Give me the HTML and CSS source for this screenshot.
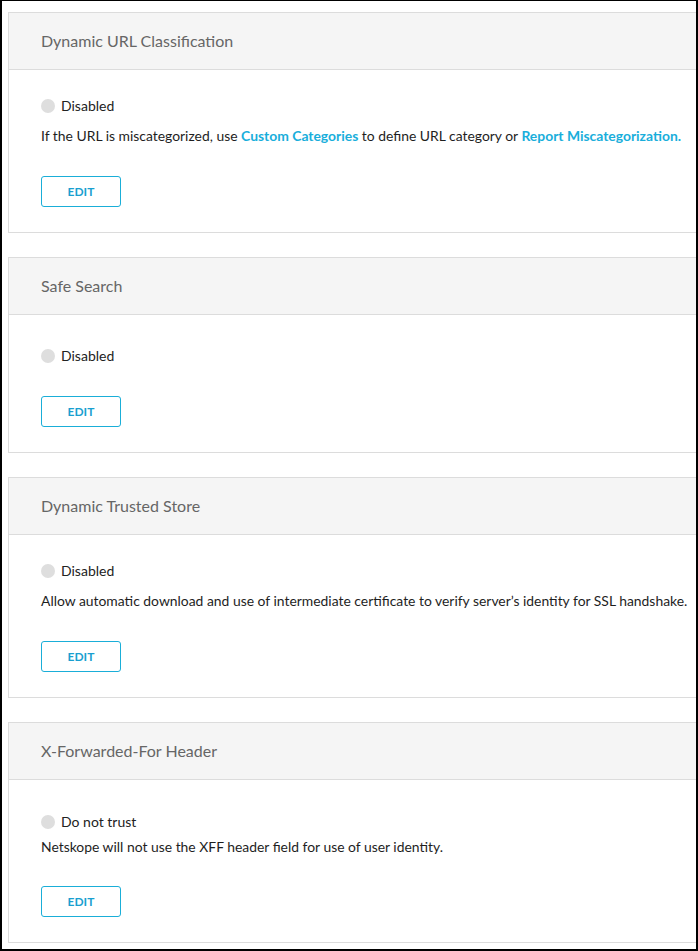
FILE: index.html
```html
<!DOCTYPE html>
<html>
<head>
<meta charset="utf-8">
<link rel="stylesheet" href="styles.css">
</head>
<body>
<div class="frame">
  <div class="stack">
    <section class="card">
      <header class="card-head">Dynamic URL Classification</header>
      <div class="card-body">
        <div class="status"><span class="dot"></span>Disabled</div>
        <p class="desc">If the URL is miscategorized, use <a class="link">Custom Categories</a> to define URL category or <a class="link">Report Miscategorization.</a></p>
        <button class="btn">EDIT</button>
      </div>
    </section>
    <section class="card">
      <header class="card-head">Safe Search</header>
      <div class="card-body card-body--short">
        <div class="status"><span class="dot"></span>Disabled</div>
        <button class="btn">EDIT</button>
      </div>
    </section>
    <section class="card">
      <header class="card-head">Dynamic Trusted Store</header>
      <div class="card-body">
        <div class="status"><span class="dot"></span>Disabled</div>
        <p class="desc">Allow automatic download and use of intermediate certificate to verify server’s identity for SSL handshake.</p>
        <button class="btn">EDIT</button>
      </div>
    </section>
    <section class="card">
      <header class="card-head">X-Forwarded-For Header</header>
      <div class="card-body card-body--tight">
        <div class="status"><span class="dot"></span>Do not trust</div>
        <p class="desc">Netskope will not use the XFF header field for use of user identity.</p>
        <button class="btn">EDIT</button>
      </div>
    </section>
  </div>
</div>
</body>
</html>
```
FILE: styles.css
```css
html, body {
  margin: 0;
  padding: 0;
  background: #fff;
}
.frame {
  box-sizing: border-box;
  width: 698px;
  height: 951px;
  border-style: solid;
  border-color: #000;
  border-width: 1px 2px 2px 2px;
  overflow: hidden;
  padding: 11px 0 0 6px;
  font-family: Lato, "Open Sans", sans-serif;
}
.stack {
  display: flex;
  flex-direction: column;
  gap: 24px;
  margin-right: -20px;
}
.card {
  border: 1px solid #dcdcdc;
  background: #fff;
}
.card-head {
  background: #f5f5f5;
  border-bottom: 1px solid #dcdcdc;
  height: 57px;
  box-sizing: border-box;
  padding-left: 32px;
  padding-bottom: 2px;
  display: flex;
  align-items: center;
  font-size: 16px;
  color: #666;
}
.card-body {
  padding: 28px 0 25px 32px;
}
.card-body--short {
  padding-top: 33px;
}
.card-body--tight {
  padding-top: 34px;
}
.status {
  display: flex;
  align-items: center;
  gap: 6px;
  font-size: 14px;
  line-height: 16px;
  color: #222;
}
.dot {
  width: 14px;
  height: 14px;
  border-radius: 50%;
  background: #dedede;
}
.desc {
  margin: 14px 0 0;
  font-size: 13.9px;
  line-height: 16px;
  color: #1e1e1e;
}
.card-body--tight .desc {
  margin-top: 9px;
}
.link {
  color: #19aedb;
  font-weight: bold;
  text-decoration: none;
}
.btn {
  display: block;
  margin-top: 32px;
  width: 80px;
  height: 31px;
  box-sizing: border-box;
  border: 1px solid #1aaed8;
  border-radius: 3px;
  background: #fff;
  color: #1a9fd0;
  font-family: Lato, "Open Sans", sans-serif;
  font-weight: bold;
  font-size: 12px;
  padding: 0;
}
.card-body--short .btn {
  margin-top: 32px;
}
.card-body--tight .btn {
  margin-top: 31px;
}
```
